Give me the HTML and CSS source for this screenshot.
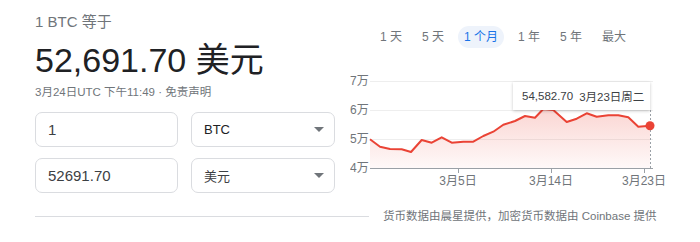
FILE: index.html
```html
<!DOCTYPE html>
<html lang="zh-CN">
<head>
  <meta charset="UTF-8">
  <title>1 BTC 等于</title>
  <link rel="stylesheet" href="styles.css">
</head>
<body>
  <div class="wrap">
    <div class="top">
      <div class="left">
        <div class="rate-label">1 BTC 等于</div>
        <div class="rate-value">52,691.70 美元</div>
        <div class="rate-time">3月24日UTC 下午11:49 · 免责声明</div>

        <div class="row first">
          <div class="field">1</div>
          <div class="select">BTC<span class="arrow"></span></div>
        </div>
        <div class="row">
          <div class="field">52691.70</div>
          <div class="select cn">美元<span class="arrow"></span></div>
        </div>
      </div>

      <div class="right">
        <div class="tabs">
          <span class="tab">1 天</span>
          <span class="tab">5 天</span>
          <span class="tab active">1 个月</span>
          <span class="tab">1 年</span>
          <span class="tab">5 年</span>
          <span class="tab">最大</span>
        </div>
        <div class="chart">
          <svg width="350" height="125" viewBox="0 0 350 125">
            <defs>
              <linearGradient id="fill" x1="0" y1="0" x2="0" y2="1">
                <stop offset="0" stop-color="#ea4335" stop-opacity="0.22"/>
                <stop offset="1" stop-color="#ea4335" stop-opacity="0.03"/>
              </linearGradient>
            </defs>
            <g stroke="#eeeeee" stroke-width="1">
              <line x1="20" y1="11.5" x2="303" y2="11.5"/>
              <line x1="20" y1="40.5" x2="303" y2="40.5"/>
              <line x1="20" y1="69.5" x2="303" y2="69.5"/>
            </g>
            <g class="ylab">
              <text x="0" y="15">7万</text>
              <text x="0" y="44">6万</text>
              <text x="0" y="73">5万</text>
              <text x="0" y="102">4万</text>
            </g>
            <polygon fill="url(#fill)" points="20,69.3 30,76.7 40,79 51.7,79.3 61,82 71.7,70 81.7,72.7 91.7,67.3 101.7,72.7 113.3,71.7 123.3,71.7 133.3,66 143.3,61.7 153.3,54.7 165,51 175,46 185,47.7 193.3,39 203.3,40 216.7,52 226.7,48.7 236.7,43.3 246.7,46.7 258.3,45.3 268.3,45.3 278.3,47.3 288.3,56.7 300,55.7 300,99 20,99"/>
            <line x1="300.5" y1="40" x2="300.5" y2="98" stroke="#9aa0a6" stroke-width="1" stroke-dasharray="2,2"/>
            <polyline fill="none" stroke="#ea4335" stroke-width="2" stroke-linejoin="round" points="20,69.3 30,76.7 40,79 51.7,79.3 61,82 71.7,70 81.7,72.7 91.7,67.3 101.7,72.7 113.3,71.7 123.3,71.7 133.3,66 143.3,61.7 153.3,54.7 165,51 175,46 185,47.7 193.3,39 203.3,40 216.7,52 226.7,48.7 236.7,43.3 246.7,46.7 258.3,45.3 268.3,45.3 278.3,47.3 288.3,56.7 300,55.7"/>
            <circle cx="300" cy="55.7" r="4.5" fill="#ea4335"/>
            <g stroke="#9aa0a6" stroke-width="1">
              <line x1="20" y1="98.5" x2="303" y2="98.5"/>
              <line x1="108.5" y1="98" x2="108.5" y2="103"/>
              <line x1="201.5" y1="98" x2="201.5" y2="103"/>
              <line x1="294.5" y1="98" x2="294.5" y2="103"/>
            </g>
            <g class="xlab">
              <text x="108" y="115">3月5日</text>
              <text x="201" y="115">3月14日</text>
              <text x="294" y="115">3月23日</text>
            </g>
          </svg>
          <div class="tooltip"><span>54,582.70</span><span>3月23日周二</span></div>
        </div>
      </div>
    </div>

    <div class="footer">
      <div class="rule"></div>
      <div class="source">货币数据由晨星提供，加密货币数据由 Coinbase 提供</div>
    </div>
  </div>
</body>
</html>
```

FILE: styles.css
```css
body {
  margin: 0;
  font-family: 'Liberation Sans', Arial, 'Noto Sans CJK SC', sans-serif;
  background: #fff;
  color: #202124;
}
.wrap {
  padding-left: 35px;
}
.top {
  display: flex;
}
.left {
  width: 315px;
}
.rate-label {
  margin-top: 13px;
  font-size: 15px;
  line-height: 18px;
  color: #70757a;
}
.rate-value {
  margin-top: 9px;
  font-size: 34px;
  line-height: 40px;
  color: #202124;
}
.rate-time {
  margin-top: 4px;
  font-size: 11.5px;
  line-height: 16px;
  color: #70757a;
}
.row {
  display: flex;
  gap: 13px;
}
.row.first {
  margin-top: 12px;
  margin-bottom: 11px;
}
.field, .select {
  box-sizing: border-box;
  height: 35px;
  border: 1px solid #dadce0;
  border-radius: 7px;
  display: flex;
  align-items: center;
}
.field {
  width: 143px;
  padding-left: 12px;
  font-size: 15px;
  color: #3c4043;
}
.select {
  width: 144px;
  padding-left: 12px;
  padding-right: 10px;
  font-size: 13px;
  color: #202124;
  justify-content: space-between;
}
.select.cn {
  color: #3c4043;
}
.arrow {
  width: 0;
  height: 0;
  border-left: 5px solid transparent;
  border-right: 5px solid transparent;
  border-top: 5px solid #70757a;
}
.right {
  width: 350px;
}
.tabs {
  display: flex;
  align-items: center;
  margin-top: 26px;
  padding-left: 24px;
  height: 22px;
  gap: 8px;
}
.tab {
  padding: 0 6px;
  font-size: 12px;
  line-height: 22px;
  color: #70757a;
  border-radius: 11px;
}
.tab.active {
  background: #eef3fb;
  color: #1a73e8;
}
.chart {
  position: relative;
  margin-top: 22px;
  height: 125px;
}
.chart svg {
  display: block;
}
.ylab text {
  font-size: 12px;
  fill: #70757a;
}
.xlab text {
  font-size: 12px;
  fill: #70757a;
  text-anchor: middle;
}
.tooltip {
  position: absolute;
  left: 163px;
  top: 12px;
  width: 137px;
  height: 28px;
  box-sizing: border-box;
  padding-left: 9px;
  display: flex;
  align-items: center;
  gap: 6px;
  background: #fff;
  box-shadow: 0 1px 3px rgba(0,0,0,0.22);
  font-size: 11.5px;
  color: #3c4043;
  white-space: nowrap;
}
.footer {
  display: flex;
  align-items: center;
  margin-top: 13px;
}
.rule {
  width: 334px;
  border-top: 1px solid #dadce0;
}
.source {
  margin-left: 14px;
  font-size: 11.5px;
  line-height: 16px;
  color: #70757a;
}
```
